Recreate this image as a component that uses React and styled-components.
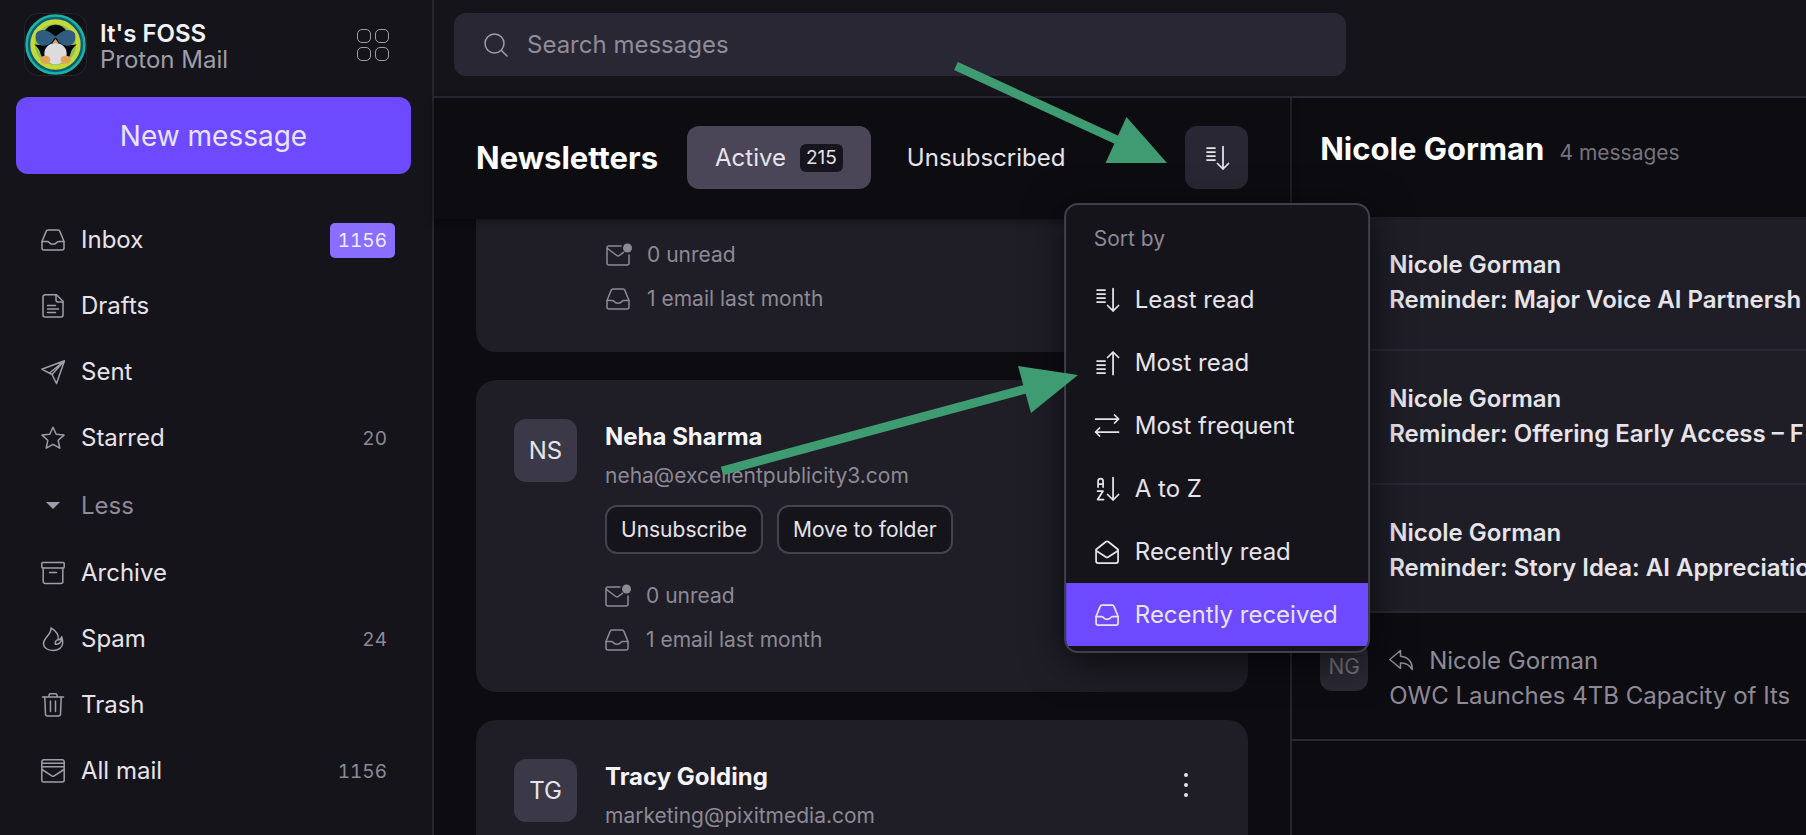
import React from 'react';
import styled, { createGlobalStyle } from 'styled-components';

const folders = [
  { name: 'Inbox', icon: 'inbox', count: 1156, active: true },
  { name: 'Drafts', icon: 'draft' },
  { name: 'Sent', icon: 'sent' },
  { name: 'Starred', icon: 'star', count: 20 },
];

const moreFolders = [
  { name: 'Archive', icon: 'archive' },
  { name: 'Spam', icon: 'spam', count: 24 },
  { name: 'Trash', icon: 'trash' },
  { name: 'All mail', icon: 'allMail', count: 1156 },
];

const sortOptions = [
  { name: 'Least read', icon: 'sortDown' },
  { name: 'Most read', icon: 'sortUp' },
  { name: 'Most frequent', icon: 'swap' },
  { name: 'A to Z', icon: 'az' },
  { name: 'Recently read', icon: 'openMail' },
  { name: 'Recently received', icon: 'inbox', selected: true },
];

const messages = [
  { sender: 'Nicole Gorman', subject: 'Reminder: Major Voice AI Partnersh', unread: true, tall: true },
  { sender: 'Nicole Gorman', subject: 'Reminder: Offering Early Access – F', unread: true, tall: true },
  { sender: 'Nicole Gorman', subject: 'Reminder: Story Idea: AI Appreciatio', unread: true },
  { sender: 'Nicole Gorman', subject: 'OWC Launches 4TB Capacity of Its', initials: 'NG', replied: true },
];

const icons = {
  inbox: (
    <>
      <path d="M1 13.500 5 3.600C5.400 2.600 6 2 7 2h10c1 0 1.600.6 2 1.600L23 13.500V20a2 2 0 0 1-2 2H3a2 2 0 0 1-2-2z" />
      <path d="M1 13.500h5.500c.6 0 1 .3 1.400.8 1 1.300 2.400 2 4.100 2s3.100-.7 4.100-2c.4-.5.8-.8 1.400-.8H23" />
    </>
  ),
  draft: (
    <>
      <path d="M4 .8h11.500L22 7.200V21a2 2 0 0 1-2 2H4a2 2 0 0 1-2-2V2.800a2 2 0 0 1 2-2z" />
      <path d="M15 1v5a2 2 0 0 0 2 2h5M6.500 11.500h8M6.500 15h11M6.500 18.500h8" />
    </>
  ),
  sent: <path d="M23.500.8 15.500 23.500 11 14.500.8 9.200zM23.500.8 11 14.500M23.500.8 8.500 13" />,
  star: <path d="m12 1.200 3.200 7 7.800.9-5.800 5.200 1.600 7.900-6.800-3.900-6.800 3.900 1.600-7.900L1 9.100l7.800-.9z" />,
  archive: (
    <>
      <path d="M1.800 1.500h20.400a1 1 0 0 1 1 1V6a1 1 0 0 1-1 1H1.800a1 1 0 0 1-1-1V2.500a1 1 0 0 1 1-1z" />
      <path d="M2.200 7v13.500a2 2 0 0 0 2 2h15.600a2 2 0 0 0 2-2V7M8.500 11.500h7" />
    </>
  ),
  spam: (
    <path d="M10 .8c.4 3.400-1 5.200-3.500 8.200C4 12 2.500 14 2.500 16.500 2.500 20.500 6.500 23.500 12 23.500s9.700-3.200 9.700-7.800c0-2.500-.4-4.500-1-5.900-.7 2.300-2.400 3.200-3.700 2.900 1.300-3.900-1.500-8.700-7-11.900zM17.500 12.700c-2.500 0-3.700 2.100-3.200 4.500 2.500.3 5.200-1.200 6.200-4.400" />
  ),
  trash: (
    <>
      <path d="M1.500 4h21M8 4V2.300A1.500 1.500 0 0 1 9.500.8h5A1.500 1.500 0 0 1 16 2.300V4" />
      <path d="m3.800 4 .7 17a2 2 0 0 0 2 2h11a2 2 0 0 0 2-2l.7-17M9.500 8v10.500M14.500 8v10.500" />
    </>
  ),
  allMail: (
    <>
      <path d="M2.800.8h18.400a2 2 0 0 1 2 2V21a2 2 0 0 1-2 2H2.800a2 2 0 0 1-2-2V2.800a2 2 0 0 1 2-2z" />
      <path d="M1 4.300h22M1 7.800h22M1 10.500l9.800 6.300c.8.5 1.600.5 2.400 0L23 10.500" />
    </>
  ),
  unread: (
    <>
      <path d="M15 3H3a2 2 0 0 0-2 2v15a2 2 0 0 0 2 2h18a2 2 0 0 0 2-2v-8M1.500 5.500l9.300 7c.8.6 1.600.6 2.400 0l4.300-3.200" />
      <circle cx="21.500" cy="5" r="4.500" fill="currentColor" stroke="none" />
    </>
  ),
  openMail: (
    <>
      <path d="M1 9.500 10.800 1.800c.8-.6 1.600-.6 2.400 0L23 9.500V21a2 2 0 0 1-2 2H3a2 2 0 0 1-2-2z" />
      <path d="m1.500 11 9.300 6c.8.5 1.600.5 2.400 0l9.300-6" />
    </>
  ),
  sortDown: <path d="M2 2h8M2 6h8M2 10h8M2 14h8M18 .5V23M12.500 17.500 18 23l5.500-5.500" />,
  sortUp: <path d="M2 10h8M2 14h8M2 18h8M2 22h8M18 23.500V1M12.500 6.500 18 1l5.500 5.500" />,
  swap: <path d="M.5 5H23.500M19.500 1 23.500 5 19.500 9M23.500 18H.5M4.500 14 .5 18 4.500 22" />,
  az: (
    <path d="M3 10V4a2.500 2.500 0 0 1 5 0v6M3 7h5M2.500 14H8l-5.500 8.500h6M18 .5V23M12.500 17.500 18 23l5.500-5.500" />
  ),
  search: (
    <>
      <circle cx="10.500" cy="10.500" r="9.500" />
      <path d="m17.500 17.500 5.500 5.500" />
    </>
  ),
  reply: (
    <path d="M11.500 1.500.8 10.500l10.700 8.800v-5.200c5.300-.4 8.800 1.700 11.700 6.400.4-7.500-4.200-12.700-11.700-13.300z" />
  ),
};

function Icon({ name, weight = 1.5 }) {
  return (
    <IconSvg viewBox="0 0 24 24" strokeWidth={weight} aria-hidden="true">
      {icons[name]}
    </IconSvg>
  );
}

function Logo() {
  return (
    <LogoSvg viewBox="0 0 62 62" role="img" aria-label="Penguin">
      <rect x=".5" y=".5" width="61" height="61" rx="14" fill="#121116" stroke="#25242b" />
      <circle cx="31" cy="31" r="28.500" fill="#0c5d79" stroke="#1ab3a3" strokeWidth="2.500" />
      <circle cx="31" cy="31" r="22.500" fill="#8fbf5a" stroke="#c3d935" strokeWidth="4.500" />
      <path d="M19 23c0-7 6-11.500 12-11.500S43 16 43 23l-2 17H21z" fill="#07080b" />
      <path d="M10 31c4 0 7 1 11 1v11c-3 1-4 0-5-4-1-3-3-6-6-8zM52 31c-4 0-7 1-11 1v11c3 1 4 0 5-4 1-3 3-6 6-8z" fill="#07080b" />
      <path d="M12 20c4-5 11-4 16 1l3 2 3-2c5-5 12-6 16-1 2 6-1 12-7 12-5 0-8-2-10-6l-2-2-2 2c-2 4-5 6-10 6-6 0-9-6-7-12z" fill="#2f5c80" />
      <ellipse cx="31" cy="40" rx="11" ry="10.500" fill="#dedbdd" />
      <ellipse cx="21" cy="46" rx="5" ry="4" fill="#e0a458" />
      <ellipse cx="41" cy="46" rx="5" ry="4" fill="#e0a458" />
      <path d="m28 29.500 3-4 3 4z" fill="#e0a458" />
    </LogoSvg>
  );
}

function Folder({ folder }) {
  return (
    <li>
      <FolderLink href="#">
        <Icon name={folder.icon} />
        {folder.name}
        {folder.count && <Count $active={folder.active}>{folder.count}</Count>}
      </FolderLink>
    </li>
  );
}

function Stats() {
  return (
    <StatList>
      <Stat><Icon name="unread" />0 unread</Stat>
      <Stat><Icon name="inbox" />1 email last month</Stat>
    </StatList>
  );
}

function Newsletter({ initials, name, email, children }) {
  return (
    <Card>
      <Avatar>{initials}</Avatar>
      <CardBody>
        <CardName>{name}</CardName>
        <CardEmail>{email}</CardEmail>
        {children}
      </CardBody>
      <KebabButton aria-label="More options"><i /><i /><i /></KebabButton>
    </Card>
  );
}

export default function App() {
  return (
    <Page>
      <GlobalStyle />
      <Sidebar>
        <Account>
          <Logo />
          <AccountText>
            <AccountName>It's FOSS</AccountName>
            <AccountApp>Proton Mail</AccountApp>
          </AccountText>
          <AppsButton aria-label="Apps"><i /><i /><i /><i /></AppsButton>
        </Account>
        <NewMessage>New message</NewMessage>
        <FolderList>
          {folders.map((folder) => <Folder key={folder.name} folder={folder} />)}
          <li>
            <LessButton><Caret />Less</LessButton>
          </li>
          {moreFolders.map((folder) => <Folder key={folder.name} folder={folder} />)}
        </FolderList>
      </Sidebar>

      <Main>
        <TopBar>
          <Search>
            <Icon name="search" />
            <SearchInput type="search" placeholder="Search messages" aria-label="Search messages" />
          </Search>
        </TopBar>
        <Columns>
          <NewsletterColumn>
            <ListHeader>
              <Title>Newsletters</Title>
              <Tabs>
                <Tab $active>Active <TabCount>215</TabCount></Tab>
                <Tab>Unsubscribed</Tab>
              </Tabs>
              <SortAnchor>
                <SortButton aria-label="Sort by"><Icon name="sortDown" weight={1.75} /></SortButton>
                <Menu>
                  <MenuTitle>Sort by</MenuTitle>
                  {sortOptions.map((option) => (
                    <MenuItem key={option.name} $selected={option.selected}>
                      <Icon name={option.icon} weight={1.75} />
                      {option.name}
                    </MenuItem>
                  ))}
                </Menu>
              </SortAnchor>
            </ListHeader>
            <CardList>
              <ScrolledCard><Stats /></ScrolledCard>
              <Newsletter initials="NS" name="Neha Sharma" email="neha@excellentpublicity3.com">
                <Actions>
                  <SmallButton>Unsubscribe</SmallButton>
                  <SmallButton>Move to folder</SmallButton>
                </Actions>
                <Stats />
              </Newsletter>
              <Newsletter initials="TG" name="Tracy Golding" email="marketing@pixitmedia.com" />
            </CardList>
          </NewsletterColumn>

          <MessageColumn>
            <MessageHeader>
              <Title>Nicole Gorman</Title>
              <MessageTotal>4 messages</MessageTotal>
            </MessageHeader>
            {messages.map((message) => (
              <Message key={message.subject} $unread={message.unread} $tall={message.tall}>
                <MessageAvatar>{message.initials}</MessageAvatar>
                <MessageText>
                  <MessageLine>
                    {message.replied && <Icon name="reply" />}
                    {message.sender}
                  </MessageLine>
                  <MessageLine>{message.subject}</MessageLine>
                </MessageText>
              </Message>
            ))}
          </MessageColumn>
        </Columns>
      </Main>

      <Annotations aria-hidden="true">
        <path d="M956 66 1117 140" />
        <path d="M1126.500 117 1167 163H1105.500z" />
        <path d="M722 471 1026 389" />
        <path d="M1018 366 1078 375 1031 413z" />
      </Annotations>
    </Page>
  );
}

const GlobalStyle = createGlobalStyle`
  * {
    box-sizing: border-box;
  }
  body {
    margin: 0;
    background: #0d0c11;
    color: #e6e4ea;
    font: 400 24px/32px Inter, "Liberation Sans", sans-serif;
  }
  button, input {
    margin: 0;
    padding: 0;
    border: 0;
    background: none;
    color: inherit;
    font: inherit;
  }
  button {
    cursor: pointer;
  }
  h1, h2, h3, p, ul {
    margin: 0;
    padding: 0;
    list-style: none;
  }
`;

const Page = styled.div`
  display: flex;
  height: 100vh;
  overflow: hidden;
`;

const IconSvg = styled.svg`
  flex: none;
  width: 24px;
  height: 24px;
  overflow: visible;
  fill: none;
  stroke: currentColor;
  stroke-linecap: round;
  stroke-linejoin: round;
`;

const Sidebar = styled.aside`
  flex: none;
  width: 434px;
  padding: 13px 21px 0 16px;
  border-right: 2px solid #26252d;
  background: #16141b;
`;

const Account = styled.div`
  display: flex;
  align-items: center;
  padding: 0 22px 0 8px;
`;

const LogoSvg = styled.svg`
  width: 63px;
  height: 63px;
`;

const AccountText = styled.div`
  flex: 1;
  margin-left: 13px;
  padding-top: 4px;
  line-height: 26px;
`;

const AccountName = styled.p`
  color: #f3f2f6;
  font-weight: 600;
`;

const AccountApp = styled.p`
  color: #a09da8;
`;

const AppsButton = styled.button`
  display: grid;
  grid-template-columns: 14px 14px;
  gap: 4px;
  i {
    height: 14px;
    border: 1px solid #a09da8;
    border-radius: 5px;
  }
`;

const NewMessage = styled.button`
  width: 100%;
  height: 77px;
  margin-top: 21px;
  border-radius: 12px;
  background: #6d4aff;
  color: #e9e4ff;
  font-size: 28px;
`;

const FolderList = styled.ul`
  padding-top: 33px;
`;

const FolderLink = styled.a`
  display: flex;
  align-items: center;
  gap: 16px;
  height: 66px;
  padding: 0 16px 0 25px;
  color: inherit;
  text-decoration: none;
  svg {
    color: #a09da8;
  }
`;

const Count = styled.span`
  margin-left: auto;
  padding: 0 8px;
  border-radius: 5px;
  background: ${(props) => (props.$active ? '#8a6eff' : 'none')};
  color: ${(props) => (props.$active ? '#f0edff' : '#8d8a96')};
  font-size: 19px;
  line-height: 35px;
  font-variant-numeric: tabular-nums;
`;

const LessButton = styled.button`
  display: flex;
  align-items: center;
  gap: 16px;
  height: 69px;
  padding-left: 25px;
  color: #8d8a96;
`;

const Caret = styled.span`
  width: 14px;
  margin: 0 5px;
  border: solid transparent;
  border-width: 7px 7px 0;
  border-top-color: #a09da8;
`;

const Main = styled.main`
  display: flex;
  flex: 1;
  flex-direction: column;
  min-width: 0;
`;

const TopBar = styled.header`
  padding: 13px 20px 20px;
  border-bottom: 2px solid #2a2833;
  background: #16141b;
`;

const Search = styled.label`
  display: flex;
  align-items: center;
  gap: 19px;
  width: 67%;
  height: 63px;
  padding: 0 30px;
  border-radius: 12px;
  background: #292733;
  color: #a09da8;
`;

const SearchInput = styled.input`
  flex: 1;
  min-width: 0;
  outline: none;
  &::placeholder {
    color: #8f8c99;
    opacity: 1;
  }
`;

const Columns = styled.div`
  display: grid;
  flex: 1;
  grid-template-columns: minmax(0, 83fr) minmax(0, 50fr);
  min-height: 0;
`;

const NewsletterColumn = styled.section`
  display: flex;
  flex-direction: column;
  min-height: 0;
`;

const ListHeader = styled.div`
  position: relative;
  z-index: 1;
  display: flex;
  flex: none;
  align-items: center;
  height: 121px;
  padding: 0 42px 2px;
  background: #0d0c11;
  box-shadow: 0 2px 8px rgba(0, 0, 0, 0.4);
`;

const Title = styled.h2`
  color: #fff;
  font-size: 31px;
  font-weight: 700;
  line-height: 40px;
  white-space: nowrap;
`;

const Tabs = styled.div`
  display: flex;
  gap: 8px;
  margin-left: 29px;
`;

const Tab = styled.button`
  display: flex;
  align-items: center;
  gap: 14px;
  height: 63px;
  padding: 0 28px;
  border-radius: 12px;
  background: ${(props) => (props.$active ? '#4a4658' : 'none')};
`;

const TabCount = styled.span`
  padding: 0 6px;
  border-radius: 6px;
  background: #16141c;
  font-size: 19px;
  line-height: 28px;
`;

const SortAnchor = styled.div`
  position: relative;
  margin-left: auto;
`;

const SortButton = styled.button`
  display: grid;
  place-items: center;
  width: 63px;
  height: 63px;
  border-radius: 12px;
  background: #292733;
`;

const Menu = styled.div`
  position: absolute;
  top: 77px;
  left: 50%;
  padding-bottom: 5px;
  overflow: hidden;
  border: 2px solid #413e4c;
  border-radius: 14px;
  background: #16141b;
  box-shadow: 0 8px 40px rgba(0, 0, 0, 0.6);
  transform: translateX(-50%);
`;

const MenuTitle = styled.h3`
  padding: 4px 28px 0;
  color: #8d8a96;
  font-size: 21px;
  font-weight: 400;
  line-height: 59px;
`;

const MenuItem = styled.button`
  display: flex;
  align-items: center;
  gap: 16px;
  width: 100%;
  height: 63px;
  padding: 0 30px 0 29px;
  background: ${(props) => (props.$selected ? '#6d4aff' : 'none')};
  white-space: nowrap;
`;

const CardList = styled.div`
  display: flex;
  flex-direction: column;
  gap: 28px;
  min-height: 0;
  padding: 0 42px;
  overflow: hidden;
`;

const Card = styled.article`
  display: flex;
  flex: none;
  align-items: flex-start;
  gap: 28px;
  padding: 39px 38px 30px;
  border-radius: 20px;
  background: #1f1d26;
`;

const ScrolledCard = styled(Card)`
  padding: 14px 38px 31px 130px;
  border-radius: 0 0 20px 20px;
`;

const Avatar = styled.div`
  flex: none;
  width: 63px;
  border-radius: 12px;
  background: #3b3848;
  line-height: 63px;
  text-align: center;
`;

const CardBody = styled.div`
  flex: 1;
  min-width: 0;
`;

const CardName = styled.h3`
  color: #f5f4f8;
  font-size: 24px;
  font-weight: 700;
  line-height: 36px;
`;

const CardEmail = styled.p`
  color: #8d8a96;
  font-size: 21px;
  line-height: 42px;
`;

const Actions = styled.div`
  display: flex;
  gap: 14px;
  margin: 8px 0 20px;
`;

const SmallButton = styled.button`
  height: 49px;
  padding: 0 14px;
  border: 2px solid #45424f;
  border-radius: 12px;
  background: #16141b;
  font-size: 21px;
`;

const StatList = styled.ul`
  color: #8d8a96;
  font-size: 21px;
`;

const Stat = styled.li`
  display: flex;
  align-items: center;
  gap: 17px;
  height: 44px;
`;

const KebabButton = styled.button`
  display: grid;
  gap: 6px;
  padding: 14px 22px;
  i {
    width: 4px;
    height: 4px;
    border-radius: 50%;
    background: #e6e4ea;
  }
`;

const MessageColumn = styled.section`
  overflow: hidden;
  border-left: 2px solid #26252d;
`;

const MessageHeader = styled.div`
  display: flex;
  align-items: baseline;
  gap: 15px;
  height: 119px;
  padding: 31px 28px 0;
`;

const MessageTotal = styled.span`
  color: #76737f;
  font-size: 21px;
  white-space: nowrap;
`;

const Message = styled.article`
  display: flex;
  gap: 21px;
  height: ${(props) => (props.$tall ? 134 : 128)}px;
  padding: 30px 0 0 28px;
  border-bottom: 2px solid #2a2832;
  background: ${(props) => (props.$unread ? '#1f1d26' : 'none')};
  color: ${(props) => (props.$unread ? '#e6e4ea' : '#8d8a96')};
  font-weight: ${(props) => (props.$unread ? 600 : 400)};
`;

const MessageAvatar = styled.div`
  flex: none;
  align-self: flex-start;
  width: 48px;
  border-radius: 12px;
  background: #2b2934;
  color: #76737f;
  font-size: 21px;
  line-height: 48px;
  text-align: center;
`;

const MessageText = styled.div`
  flex: 1;
  min-width: 0;
`;

const MessageLine = styled.p`
  display: flex;
  align-items: center;
  gap: 16px;
  overflow: hidden;
  line-height: 35px;
  white-space: nowrap;
`;

const Annotations = styled.svg`
  position: absolute;
  top: 0;
  left: 0;
  z-index: 2;
  width: 100%;
  height: 100%;
  fill: #3f9b72;
  pointer-events: none;
  path:nth-child(odd) {
    stroke: #3f9b72;
    stroke-width: 9px;
  }
`;
